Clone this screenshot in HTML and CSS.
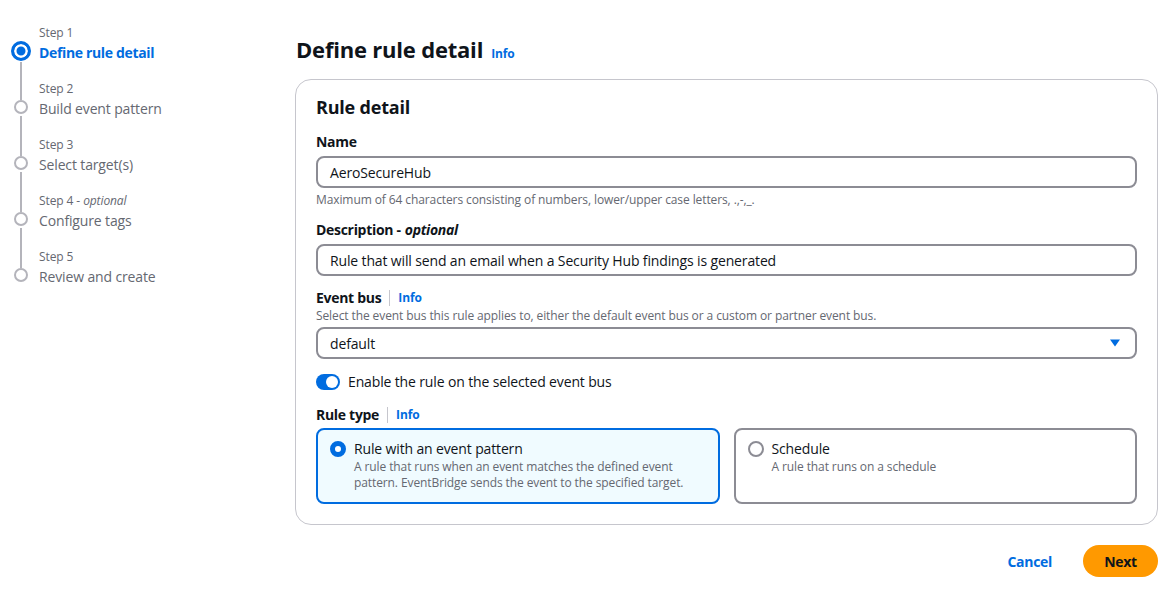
FILE: index.html
```html
<!DOCTYPE html>
<html lang="en">
<head>
<meta charset="utf-8">
<title>Define rule detail</title>
<link rel="stylesheet" href="styles.css">
</head>
<body>
<div class="page">
  <nav class="steps">
    <div class="step active">
      <div class="rail"><span class="dot"></span><span class="line"></span></div>
      <div class="step-text"><div class="step-num">Step 1</div><div class="step-name">Define rule detail</div></div>
    </div>
    <div class="step">
      <div class="rail"><span class="dot"></span><span class="line"></span></div>
      <div class="step-text"><div class="step-num">Step 2</div><div class="step-name">Build event pattern</div></div>
    </div>
    <div class="step">
      <div class="rail"><span class="dot"></span><span class="line"></span></div>
      <div class="step-text"><div class="step-num">Step 3</div><div class="step-name">Select target(s)</div></div>
    </div>
    <div class="step">
      <div class="rail"><span class="dot"></span><span class="line"></span></div>
      <div class="step-text"><div class="step-num">Step 4 - <i>optional</i></div><div class="step-name">Configure tags</div></div>
    </div>
    <div class="step last">
      <div class="rail"><span class="dot"></span></div>
      <div class="step-text"><div class="step-num">Step 5</div><div class="step-name">Review and create</div></div>
    </div>
  </nav>

  <main class="main">
    <h1 class="title"><span>Define rule detail</span><a class="info">Info</a></h1>
    <section class="card">
      <h2 class="card-title">Rule detail</h2>

      <div class="field">
        <label class="label">Name</label>
        <div class="input">AeroSecureHub</div>
        <div class="hint">Maximum of 64 characters consisting of numbers, lower/upper case letters, .,-,_.</div>
      </div>

      <div class="field">
        <label class="label">Description - <i>optional</i></label>
        <div class="input">Rule that will send an email when a Security Hub findings is generated</div>
      </div>

      <div class="field">
        <label class="label">Event bus <span class="sep"></span><a class="info">Info</a></label>
        <div class="desc">Select the event bus this rule applies to, either the default event bus or a custom or partner event bus.</div>
        <div class="input select">default
          <svg class="caret" width="12" height="10" viewBox="0 0 12 10"><path d="M1 1.5h10L6 8.5z" fill="#006ce0"/></svg>
        </div>
      </div>

      <div class="toggle-row">
        <span class="toggle"><span class="knob"></span></span>
        <span>Enable the rule on the selected event bus</span>
      </div>

      <div class="field rule-type">
        <label class="label">Rule type <span class="sep"></span><a class="info">Info</a></label>
        <div class="tiles">
          <div class="tile selected">
            <span class="radio checked"></span>
            <div>
              <div class="tile-title">Rule with an event pattern</div>
              <div class="tile-desc">A rule that runs when an event matches the defined event pattern. EventBridge sends the event to the specified target.</div>
            </div>
          </div>
          <div class="tile">
            <span class="radio"></span>
            <div>
              <div class="tile-title">Schedule</div>
              <div class="tile-desc">A rule that runs on a schedule</div>
            </div>
          </div>
        </div>
      </div>
    </section>

    <div class="actions">
      <a class="cancel">Cancel</a>
      <button class="next">Next</button>
    </div>
  </main>
</div>
</body>
</html>
```

FILE: styles.css
```css
* { box-sizing: border-box; }
html, body { margin: 0; padding: 0; background: #fff; }
body {
  font-family: "Open Sans", "Noto Sans", Arial, sans-serif;
  color: #0f141a;
  font-size: 14px;
  letter-spacing: -0.14px;
}
.page {
  display: flex;
  padding: 25px 11px 0 11px;
}
.steps {
  width: 284px;
  flex: none;
  display: flex;
  flex-direction: column;
}
.step {
  display: flex;
  gap: 8px;
  height: 56px;
}
.rail {
  width: 20px;
  display: flex;
  flex-direction: column;
  align-items: center;
  padding-top: 19px;
}
.dot {
  width: 14px;
  height: 14px;
  border-radius: 50%;
  border: 2px solid #b4b4bb;
  background: #fff;
  flex: none;
}
.line {
  width: 2px;
  flex: 1;
  background: #b4b4bb;
  margin: 2px 0 -19px;
}
.step.active .rail { padding-top: 16px; }
.step.active .line { margin-top: 1px; }
.step.active .dot {
  width: 20px;
  height: 20px;
  border: 3px solid #006ce0;
  background: #006ce0;
  box-shadow: inset 0 0 0 2.5px #fff;
}
.step-num {
  font-size: 12px;
  line-height: 16px;
  color: #656871;
  letter-spacing: -0.1px;
}
.step-name {
  font-size: 14px;
  line-height: 24px;
  color: #656871;
}
.step.active .step-name {
  color: #006ce0;
  font-weight: 700;
  letter-spacing: -0.35px;
}
.main {
  flex: 1;
  min-width: 0;
}
.title {
  display: flex;
  align-items: baseline;
  gap: 8px;
  margin: 9px 0 0 1px;
  height: 30px;
  font-size: 22px;
  line-height: 30px;
  font-weight: 700;
  letter-spacing: -0.2px;
}
.info {
  color: #006ce0;
  font-size: 12px;
  font-weight: 700;
  letter-spacing: -0.1px;
  line-height: 16px;
}
.card {
  margin-top: 15px;
  border: 1px solid #c6c6cd;
  border-radius: 16px;
  padding: 13px 20px 20px;
}
.card-title {
  margin: 0 0 10px;
  font-size: 18px;
  line-height: 28px;
  font-weight: 700;
  letter-spacing: -0.2px;
}
.field { margin-bottom: 11px; }
.label {
  display: flex;
  align-items: center;
  font-weight: 700;
  font-size: 14px;
  line-height: 22px;
  margin-bottom: 3px;
  letter-spacing: -0.3px;
}
.label i { margin-left: 4px; }
.sep {
  width: 1px;
  height: 16px;
  background: #c6c6cd;
  margin: 0 8px;
}
.input {
  height: 32px;
  border: 2px solid #8c8c94;
  border-radius: 8px;
  padding: 0 12px;
  display: flex;
  align-items: center;
  font-size: 14px;
}
.hint {
  font-size: 12px;
  color: #656871;
  margin-top: 4px;
  line-height: 16px;
  letter-spacing: -0.1px;
}
.desc {
  font-size: 12px;
  color: #656871;
  line-height: 16px;
  margin: -4px 0 3px;
  letter-spacing: -0.1px;
}
.select { justify-content: space-between; }
.caret { margin-right: 2px; }
.toggle-row {
  display: flex;
  align-items: center;
  gap: 8px;
  margin-top: 13px;
  margin-bottom: 13px;
}
.toggle {
  width: 24px;
  height: 16px;
  border-radius: 8px;
  background: #006ce0;
  position: relative;
  flex: none;
}
.knob {
  position: absolute;
  right: 2px;
  top: 2px;
  width: 12px;
  height: 12px;
  border-radius: 50%;
  background: #fff;
}
.rule-type { margin-bottom: 0; }
.rule-type .label { margin-bottom: 2px; }
.tiles {
  display: grid;
  grid-template-columns: 1fr 1fr;
  gap: 14px;
}
.tile {
  border: 2px solid #8c8c94;
  border-radius: 8px;
  padding: 10px 12px 12px;
  display: flex;
  gap: 8px;
  height: 76px;
}
.tile.selected {
  border-color: #006ce0;
  background: #f0fbff;
}
.radio {
  width: 16px;
  height: 16px;
  border-radius: 50%;
  border: 2px solid #8c8c94;
  flex: none;
  margin-top: 1px;
  background: #fff;
}
.radio.checked {
  border: 5px solid #006ce0;
}
.tile-title {
  font-size: 14px;
  line-height: 18px;
}
.tile-desc {
  font-size: 12px;
  color: #656871;
  line-height: 16px;
  margin-top: 1px;
  letter-spacing: -0.1px;
}
.actions {
  display: flex;
  justify-content: flex-end;
  align-items: center;
  gap: 31px;
  margin-top: 20px;
}
.cancel {
  color: #006ce0;
  font-weight: 700;
  font-size: 14px;
  letter-spacing: -0.3px;
}
.next {
  background: #ff9900;
  border: none;
  border-radius: 20px;
  height: 32px;
  width: 75px;
  font-family: inherit;
  font-weight: 700;
  font-size: 14px;
  letter-spacing: -0.3px;
  color: #0f141a;
}
```
